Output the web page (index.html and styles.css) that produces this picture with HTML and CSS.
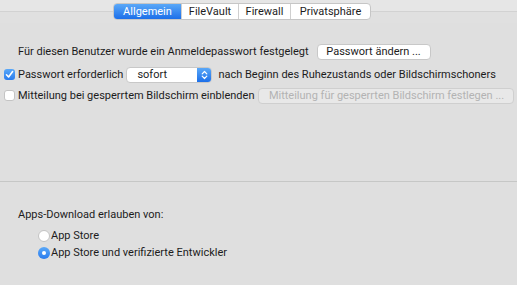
FILE: index.html
```html
<!DOCTYPE html>
<html lang="de">
<head>
  <meta charset="UTF-8" />
  <title>Sicherheit</title>
  <link rel="stylesheet" href="styles.css">
</head>
<body>
  <div class="pane">
    <!-- Tab bar -->
    <div class="tabbar">
      <div class="tabs">
        <span class="tab active">Allgemein</span>
        <span class="tab">FileVault</span>
        <span class="tab">Firewall</span>
        <span class="tab">Privatsphäre</span>
      </div>
    </div>

    <div class="general">
      <div class="row row-first">
        <span class="label">Für diesen Benutzer wurde ein Anmeldepasswort festgelegt</span>
        <button class="btn">Passwort ändern ...</button>
      </div>
      <div class="row">
        <span class="check checked">
          <svg width="9" height="9" viewBox="0 0 9 9"><path d="M1.5 4.8 L3.6 7 L7.6 1.6" fill="none" stroke="#fff" stroke-width="1.6" stroke-linecap="round" stroke-linejoin="round"/></svg>
        </span>
        <span class="label">Passwort erforderlich</span>
        <span class="popup">
          <span class="popup-text">sofort</span>
          <span class="popup-arrows">
            <svg width="7" height="10" viewBox="0 0 7 10"><path d="M1.2 3.8 L3.5 1.5 L5.8 3.8 M1.2 6.2 L3.5 8.5 L5.8 6.2" fill="none" stroke="#fff" stroke-width="1.2" stroke-linecap="round" stroke-linejoin="round"/></svg>
          </span>
        </span>
        <span class="label">nach Beginn des Ruhezustands oder Bildschirmschoners</span>
      </div>
      <div class="row">
        <span class="check"></span>
        <span class="label">Mitteilung bei gesperrtem Bildschirm einblenden</span>
        <button class="btn btn-wide" disabled>Mitteilung für gesperrten Bildschirm festlegen ...</button>
      </div>
    </div>

    <div class="divider"></div>

    <div class="downloads">
      <div class="dl-title">Apps-Download erlauben von:</div>
      <div class="radio-row">
        <span class="radio"></span>
        <span class="label">App Store</span>
      </div>
      <div class="radio-row">
        <span class="radio selected"></span>
        <span class="label">App Store und verifizierte Entwickler</span>
      </div>
    </div>
  </div>
</body>
</html>
```

FILE: styles.css
```css
* { box-sizing: border-box; margin: 0; padding: 0; }
body {
  background: #dfdfdf;
  font-family: "Roboto", "Helvetica Neue", sans-serif;
  font-size: 11px;
  color: #1c1c1c;
  width: 517px;
  height: 285px;
  overflow: hidden;
}
.pane { display: flex; flex-direction: column; }

/* tab bar: line runs behind the segmented control */
.tabbar {
  height: 23px;
  padding: 3px 0 0 113px;
  display: flex;
  background: linear-gradient(#e6e6e6 0, #e6e6e6 11px, #d2d2d2 11px, #d2d2d2 12px, #e0e0e0 12px);
}
.tabs {
  display: flex;
  height: 17px;
  border: 1px solid #c6c6c6;
  border-radius: 4px;
  background: #fff;
  overflow: hidden;
}
.tab {
  display: flex; align-items: center; justify-content: center;
  flex-shrink: 0;
  border-left: 1px solid #cfcfcf;
  line-height: 1;
}
.tab:first-child { border-left: none; }
.tab:nth-child(1) { width: 67px; }
.tab:nth-child(2) { width: 57px; }
.tab:nth-child(3) { width: 52px; }
.tab:nth-child(4) { width: 80px; }
.tab.active {
  background: linear-gradient(#5aa8f8, #1c6fe9);
  color: #fff;
}

.general {
  padding: 20px 0 0 4px;
  display: flex; flex-direction: column;
  height: 158px;
}
.row {
  display: flex; align-items: center;
  height: 21px;
  white-space: nowrap;
}
.row > * { flex-shrink: 0; }
.row-first { padding-left: 14px; height: 17px; margin-bottom: 4px; }
.row-first .btn { margin-left: 8px; width: 114px; padding: 0; }

.check {
  width: 11px; height: 11px;
  border-radius: 3px;
  border: 1px solid #c4c4c4;
  background: #fff;
  margin-right: 3px;
  display: flex; align-items: center; justify-content: center;
}
.check.checked {
  border: none;
  background: linear-gradient(#5aa8f8, #2a7cee);
}

.btn {
  font: inherit;
  height: 16px;
  padding: 0 15px;
  border: 1px solid #c8c8c8;
  border-radius: 4px;
  background: #fff;
  color: #1c1c1c;
  line-height: 1;
}
.btn-wide {
  width: 256px;
  margin-left: 4px;
  padding: 0;
}
.btn[disabled] {
  background: #e8e8e8;
  color: #b3b3b3;
  border-color: #cfcfcf;
}

.popup {
  display: flex; align-items: stretch;
  width: 86px; height: 16px;
  margin: 0 6px 0 3px;
  border: 1px solid #c8c8c8;
  border-radius: 4px;
  background: #fff;
  overflow: hidden;
}
.popup-text { flex: 1; padding-left: 10px; display: flex; align-items: center; }
.popup-arrows {
  width: 14px;
  background: linear-gradient(#5aa8f8, #1c6fe9);
  display: flex; align-items: center; justify-content: center;
}

.divider {
  height: 1px;
  background: #c6c7c6;
}

.downloads {
  padding: 26px 0 0 18px;
  display: flex; flex-direction: column;
}
.dl-title { height: 16px; margin-bottom: 3px; }
.radio-row {
  display: flex; align-items: center;
  height: 17px;
  padding-left: 20px;
}
.radio {
  width: 12px; height: 12px;
  border-radius: 50%;
  border: 1px solid #c4c4c4;
  background: #fff;
  margin-right: 1px;
  display: flex; align-items: center; justify-content: center;
}
.radio.selected {
  border: none;
  background: linear-gradient(#5aa8f8, #2a7cee);
}
.radio.selected::after {
  content: "";
  width: 4px; height: 4px;
  border-radius: 50%;
  background: #fff;
}
```
